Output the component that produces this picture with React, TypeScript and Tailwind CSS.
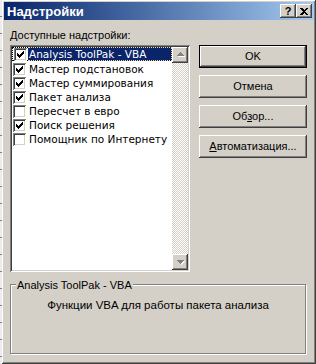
import React from "react";

const raised =
  "shadow-[inset_-1px_-1px_#404040,inset_1px_1px_#ffffff,inset_-2px_-2px_#808080,inset_2px_2px_#d4d0c8]";
const sunken =
  "shadow-[inset_1px_1px_#808080,inset_-1px_-1px_#ffffff,inset_2px_2px_#404040,inset_-2px_-2px_#d4d0c8]";

const items: [string, boolean][] = [
  ["Analysis ToolPak - VBA", true],
  ["Мастер подстановок", true],
  ["Мастер суммирования", true],
  ["Пакет анализа", true],
  ["Пересчет в евро", false],
  ["Поиск решения", true],
  ["Помощник по Интернету", false],
];

function CheckBox({ checked }: { checked: boolean }) {
  return (
    <div className={`w-[13px] h-[13px] bg-white flex items-center justify-center ${sunken}`}>
      {checked && (
        <svg width="7" height="7" viewBox="0 0 7 7" shapeRendering="crispEdges">
          <rect x="6" y="0" width="1" height="1" />
          <rect x="5" y="1" width="2" height="1" />
          <rect x="0" y="2" width="1" height="1" />
          <rect x="4" y="2" width="3" height="1" />
          <rect x="0" y="3" width="2" height="1" />
          <rect x="3" y="3" width="3" height="1" />
          <rect x="0" y="4" width="5" height="1" />
          <rect x="1" y="5" width="3" height="1" />
          <rect x="2" y="6" width="1" height="1" />
        </svg>
      )}
    </div>
  );
}

function Arrow({ down }: { down?: boolean }) {
  return (
    <svg width="9" height="6" viewBox="0 0 9 6" shapeRendering="crispEdges">
      {down ? (
        <>
          <path d="M2 2h7l-3.5 4z" fill="#ffffff" />
          <path d="M1 1h7l-3.5 4z" fill="#808080" />
        </>
      ) : (
        <>
          <path d="M5.5 1l3.5 4h-7z" fill="#ffffff" />
          <path d="M4.5 0l3.5 4h-7z" fill="#808080" />
        </>
      )}
    </svg>
  );
}

function Button({
  children,
  isDefault,
}: {
  children: React.ReactNode;
  isDefault?: boolean;
}) {
  return (
    <div
      className={`h-[23px] w-[108px] flex items-center justify-center bg-[#d4d0c8] ${
        isDefault ? "border border-black" : ""
      }`}
    >
      <div className={`w-full h-full flex items-center justify-center ${raised}`}>
        {children}
      </div>
    </div>
  );
}

export default function App() {
  return (
    <div className="w-[316px] h-[364px] flex bg-[#d4d0c8] text-black text-[11px] leading-[13px] font-['Liberation_Sans',Arial,sans-serif] overflow-hidden">
      <div className="w-[2px] h-full bg-[#ececec] bg-[repeating-linear-gradient(to_bottom,#ececec_0,#ececec_16px,#808080_16px,#808080_17px)]" />

      <div className={`flex-1 flex flex-col p-[2px] ${raised}`}>
        {/* title bar */}
        <div className="h-[18px] flex items-center bg-linear-to-r from-[#0a246a] to-[#a6caf0] pl-[3px] pr-[2px]">
          <span className="flex-1 text-white font-bold text-[13px]">Надстройки</span>
          <div className={`w-[16px] h-[14px] bg-[#d4d0c8] flex items-center justify-center font-bold text-[11px] leading-none ${raised}`}>
            ?
          </div>
          <div className={`w-[16px] h-[14px] bg-[#d4d0c8] flex items-center justify-center ${raised}`}>
            <svg width="8" height="7" viewBox="0 0 8 7" shapeRendering="crispEdges">
              <path d="M0 0h2l2 2l2-2h2l-3 3.5l3 3.5h-2l-2-2l-2 2h-2l3-3.5z" fill="#000" />
            </svg>
          </div>
        </div>

        {/* body */}
        <div className="flex flex-col pl-[6px] pt-[9px]">
          <div className="mb-[3px]">Доступные надстройки:</div>
          <div className="flex">
            <div className={`w-[180px] h-[227px] bg-white p-[2px] flex ${sunken}`}>
              <div className="flex-1 flex flex-col font-['DejaVu_Sans',sans-serif] text-[10.5px] leading-[13px]">
                {items.map(([label, checked], i) => (
                  <div key={label} className={`h-[14px] flex ${i === 1 ? "mt-[1px]" : ""}`}>
                    <div
                      className={`w-[16px] flex items-center pl-[1px] ${
                        i === 0 ? "border-y border-l border-dotted border-black" : ""
                      }`}
                    >
                      <CheckBox checked={checked} />
                    </div>
                    <div
                      className={`flex-1 flex items-center pl-[1px] whitespace-nowrap ${
                        i === 0
                          ? "bg-[#0a246a] text-white border-y border-r border-dotted border-[#f5db95]"
                          : ""
                      }`}
                    >
                      {label}
                    </div>
                  </div>
                ))}
              </div>
              <div className="w-[16px] flex flex-col">
                <div className={`h-[16px] bg-[#d4d0c8] flex items-center justify-center ${raised}`}>
                  <Arrow />
                </div>
                <div className="flex-1 bg-[repeating-conic-gradient(#ffffff_0_25%,#d4d0c8_0_50%)] bg-size-[2px_2px]" />
                <div className={`h-[16px] bg-[#d4d0c8] flex items-center justify-center ${raised}`}>
                  <Arrow down />
                </div>
              </div>
            </div>

            <div className="ml-[9px] flex flex-col gap-[7px]">
              <Button isDefault>OK</Button>
              <Button>Отмена</Button>
              <Button>
                <span>
                  Об<span className="underline">з</span>ор...
                </span>
              </Button>
              <Button>
                <span>
                  <span className="underline">А</span>втоматизация...
                </span>
              </Button>
            </div>
          </div>

          <fieldset className="mt-[6px] w-[296px] h-[76px] border border-[#808080] shadow-[inset_1px_1px_#ffffff,1px_1px_#ffffff] px-0 pb-0 pt-0 m-0 min-w-0">
            <legend className="ml-[5px] px-[1px] bg-[#d4d0c8] translate-y-[1px]">Analysis ToolPak - VBA</legend>
            <div className="pt-[8px] text-center text-[11.5px]">Функции VBA для работы пакета анализа</div>
          </fieldset>
        </div>
      </div>
    </div>
  );
}
